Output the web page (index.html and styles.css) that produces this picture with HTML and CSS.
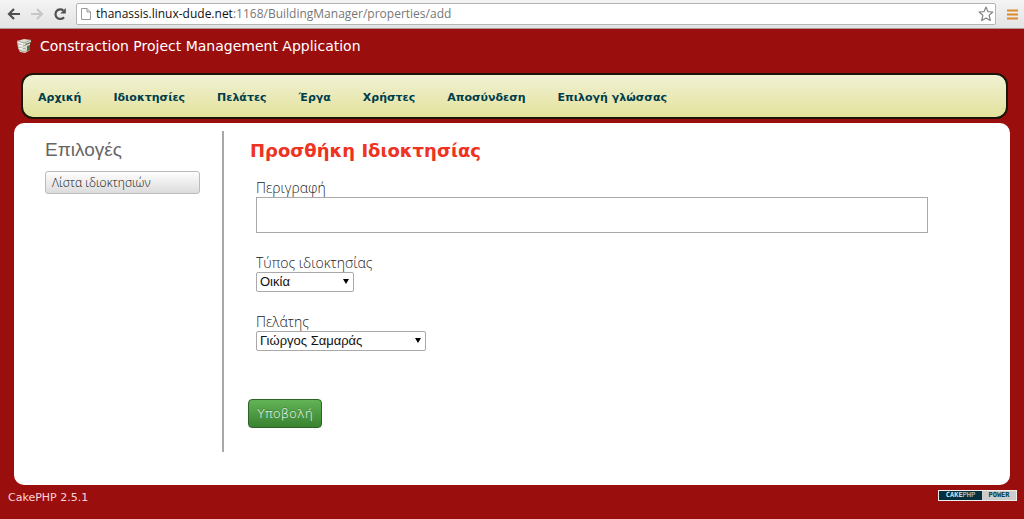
FILE: index.html
```html
<!DOCTYPE html>
<html lang="el">
<head>
<meta charset="utf-8">
<title>Constraction Project Management Application</title>
<link rel="stylesheet" href="styles.css">
</head>
<body>
<div class="toolbar">
  <button class="tool" aria-label="Back"><svg width="14" height="14" viewBox="0 0 14 14"><path d="M13 7H2.5M7 2L2 7l5 5" fill="none" stroke="#505050" stroke-width="2.2"/></svg></button>
  <button class="tool" aria-label="Forward"><svg width="14" height="14" viewBox="0 0 14 14"><path d="M1 7h10.500M7 2l5 5-5 5" fill="none" stroke="#c6c6c6" stroke-width="2"/></svg></button>
  <button class="tool" aria-label="Reload"><svg width="14" height="14" viewBox="0 0 14 14"><path d="M11 10.200A4.800 4.800 0 1 1 10.400 3.500" fill="none" stroke="#505050" stroke-width="2.200"/><path d="M12.800 1v5.500H7.300z" fill="#505050"/></svg></button>
  <div class="address">
    <svg width="10" height="12" viewBox="0 0 10 12"><path d="M.5.5h5.500l3.500 3.500v7.500h-9zM6 .5v3.500h3.500" fill="#fff" stroke="#999"/></svg>
    <div class="url" role="textbox" aria-label="Address"><span class="host">thanassis.linux-dude.net</span>:1168/BuildingManager/properties/add</div>
    <button class="star" aria-label="Bookmark"><svg width="16" height="16" viewBox="0 0 16 16"><path d="M8 1l1.900 4.600 5 .4-3.800 3.200 1.200 5.300L8 11.900l-4.300 2.600 1.200-5.300L1.100 6l5-.4z" fill="#fff" stroke="#858585" stroke-width="1.200" stroke-linejoin="round"/></svg></button>
  </div>
  <button class="tool" aria-label="Menu"><svg width="11" height="11" viewBox="0 0 11 11"><path d="M0 1.500h11M0 5.500h11M0 9.500h11" stroke="#dc8a2c" stroke-width="2"/></svg></button>
</div>
<header class="header">
  <svg width="16" height="16" viewBox="0 0 16 16"><path d="M1 3l7-2 7 1v2l-1 1v7l-5 3-5-1-2-4z" fill="#deded2"/><path d="M1 3l7 2 7-3M2 6l6 2 2-1M2 9l6 2 2-1M3 12l5 2 4-2" fill="none" stroke="#a3a396"/><path d="M9 6l6-2v1l-5 2zM11 8l3-1v5l-3 1z" fill="#4c7050"/><path d="M2 4l5 2M3 7l4 1M3 10l4 1" stroke="#fff"/></svg>
  <h1>Constraction Project Management Application</h1>
</header>
<nav class="menu">
  <a href="#">Αρχική</a><a href="#">Ιδιοκτησίες</a><a href="#">Πελάτες</a><a href="#">Έργα</a><a href="#">Χρήστες</a><a href="#">Αποσύνδεση</a><a href="#">Επιλογή γλώσσας</a>
</nav>
<main class="content">
  <aside class="actions">
    <h3>Επιλογές</h3>
    <a class="action" href="#">Λίστα ιδιοκτησιών</a>
  </aside>
  <form class="form">
    <h2>Προσθήκη Ιδιοκτησίας</h2>
    <div class="field"><label for="description">Περιγραφή</label><input id="description" type="text"></div>
    <div class="field"><label for="type">Τύπος ιδιοκτησίας</label><div class="pick"><select id="type" class="short"><option>Οικία</option></select></div></div>
    <div class="field"><label for="client">Πελάτης</label><div class="pick"><select id="client" class="long"><option>Γιώργος Σαμαράς</option></select></div></div>
    <button class="submit" type="submit">Υποβολή</button>
  </form>
</main>
<footer class="footer">
  <span>CakePHP 2.5.1</span>
  <a class="badge" href="#"><span class="cake"><b>CAKE</b>PHP</span><span class="power">POWER</span></a>
</footer>
</body>
</html>
```
FILE: styles.css
```css
* { box-sizing: border-box; }
body {
  margin: 0;
  min-height: 100vh;
  background: #9b0e0e;
  color: #333;
  font-family: "DejaVu Sans", sans-serif;
  font-size: 13px;
}
h1, h2, h3 { margin: 0; }
button { font-family: inherit; cursor: pointer; }
.toolbar {
  display: flex;
  align-items: center;
  height: 29px;
  padding: 0 6px 0 7px;
  gap: 9px;
  background: linear-gradient(#f4f4f4, #e3e3e3);
  border-bottom: 1px solid #a99;
}
.tool, .star { display: flex; padding: 0; border: 0; background: none; }
.address {
  display: flex;
  flex: 1;
  align-items: center;
  gap: 5px;
  height: 22px;
  padding: 0 1px 0 4px;
  margin-right: 2px;
  background: #fff;
  border: 1px solid #b5b5b5;
  border-radius: 2px;
}
.url {
  flex: 1;
  color: #777;
  font-family: "Open Sans", sans-serif;
  font-size: 12px;
  line-height: 18px;
  white-space: nowrap;
}
.host { color: #111; }
.header {
  display: flex;
  align-items: center;
  gap: 8px;
  height: 33px;
  padding: 0 16px;
}
.header h1 { color: #fff; font-size: 14px; font-weight: 400; }
.menu {
  display: flex;
  align-items: center;
  gap: 32px;
  height: 46px;
  margin: 11px 16px 4px 21px;
  padding: 2px 15px 0;
  background: linear-gradient(#f1f1d4, #e3e29c);
  border: 2px solid #1b1408;
  border-radius: 12px;
}
.menu a {
  color: #003d4c;
  font-size: 11px;
  font-weight: 700;
  text-decoration: none;
  white-space: nowrap;
}
.content {
  display: flex;
  margin: 0 14px;
  padding: 8px 0 33px;
  background: #fff;
  border-radius: 10px;
}
.actions { width: 210px; padding: 8px 22px 0 31px; border-right: 2px solid #a8a8a8; }
.actions h3 {
  color: #666;
  font-family: "Liberation Sans", sans-serif;
  font-size: 19px;
  font-weight: 400;
  line-height: 22px;
}
.action {
  display: block;
  margin-top: 10px;
  padding: 0 6px;
  border: 1px solid #bbb;
  border-radius: 3px;
  background: linear-gradient(#fefefe, #dcdcdc);
  color: #111;
  font-family: "Open Sans", sans-serif;
  font-size: 12px;
  font-weight: 300;
  line-height: 21px;
  text-decoration: none;
  white-space: nowrap;
}
.form { flex: 1; padding: 8px 82px 24px 24px; }
.form h2 { padding-left: 2px; color: #e32; font-size: 18px; line-height: 24px; }
.field { padding: 0 0 0 8px; margin-bottom: 21px; }
.form h2 + .field { margin-top: 16px; }
.field label {
  display: block;
  color: #222;
  font-family: "Open Sans", sans-serif;
  font-size: 14px;
  font-weight: 300;
  line-height: 18px;
}
.field input { display: block; width: 100%; height: 36px; border: 1px solid #aaa; }
.pick { position: relative; display: table; }
.pick::after {
  content: "";
  position: absolute;
  top: 7px;
  right: 5px;
  border: 3px solid transparent;
  border-top: 5px solid #000;
  border-bottom: 0;
  pointer-events: none;
}
.field select {
  display: block;
  height: 20px;
  padding: 0 3px 1px;
  appearance: none;
  background: #fff;
  border: 1px solid #a9a9a9;
  border-radius: 2px;
  color: #111;
  font-family: "Liberation Sans", sans-serif;
  font-size: 13px;
}
.short { width: 98px; }
.long { width: 170px; }
.submit {
  display: block;
  height: 29px;
  margin-top: 48px;
  padding: 0 8px;
  border: 1px solid #2d6324;
  border-radius: 4px;
  background: linear-gradient(#62b356, #3a8230);
  color: #fff;
  font-family: "DejaVu Sans Light", "DejaVu Sans", sans-serif;
  font-weight: 200;
  font-size: 13px;
  text-shadow: 0 -1px 0 #3c8030;
}
.footer {
  display: flex;
  justify-content: space-between;
  align-items: flex-start;
  padding: 5px 7px 0 8px;
  color: #fbd5d5;
  font-size: 11px;
  line-height: 15px;
}
.badge {
  display: flex;
  width: 79px;
  height: 11px;
  border: 1px solid #eee;
  color: #003d4c;
  font-family: "DejaVu Sans Mono", monospace;
  font-size: 7px;
  line-height: 9px;
  text-align: center;
  text-decoration: none;
}
.cake { width: 43px; background: #06303e; color: #d0e0e0; }
.power { flex: 1; background: #ccc; font-weight: 700; }
```
